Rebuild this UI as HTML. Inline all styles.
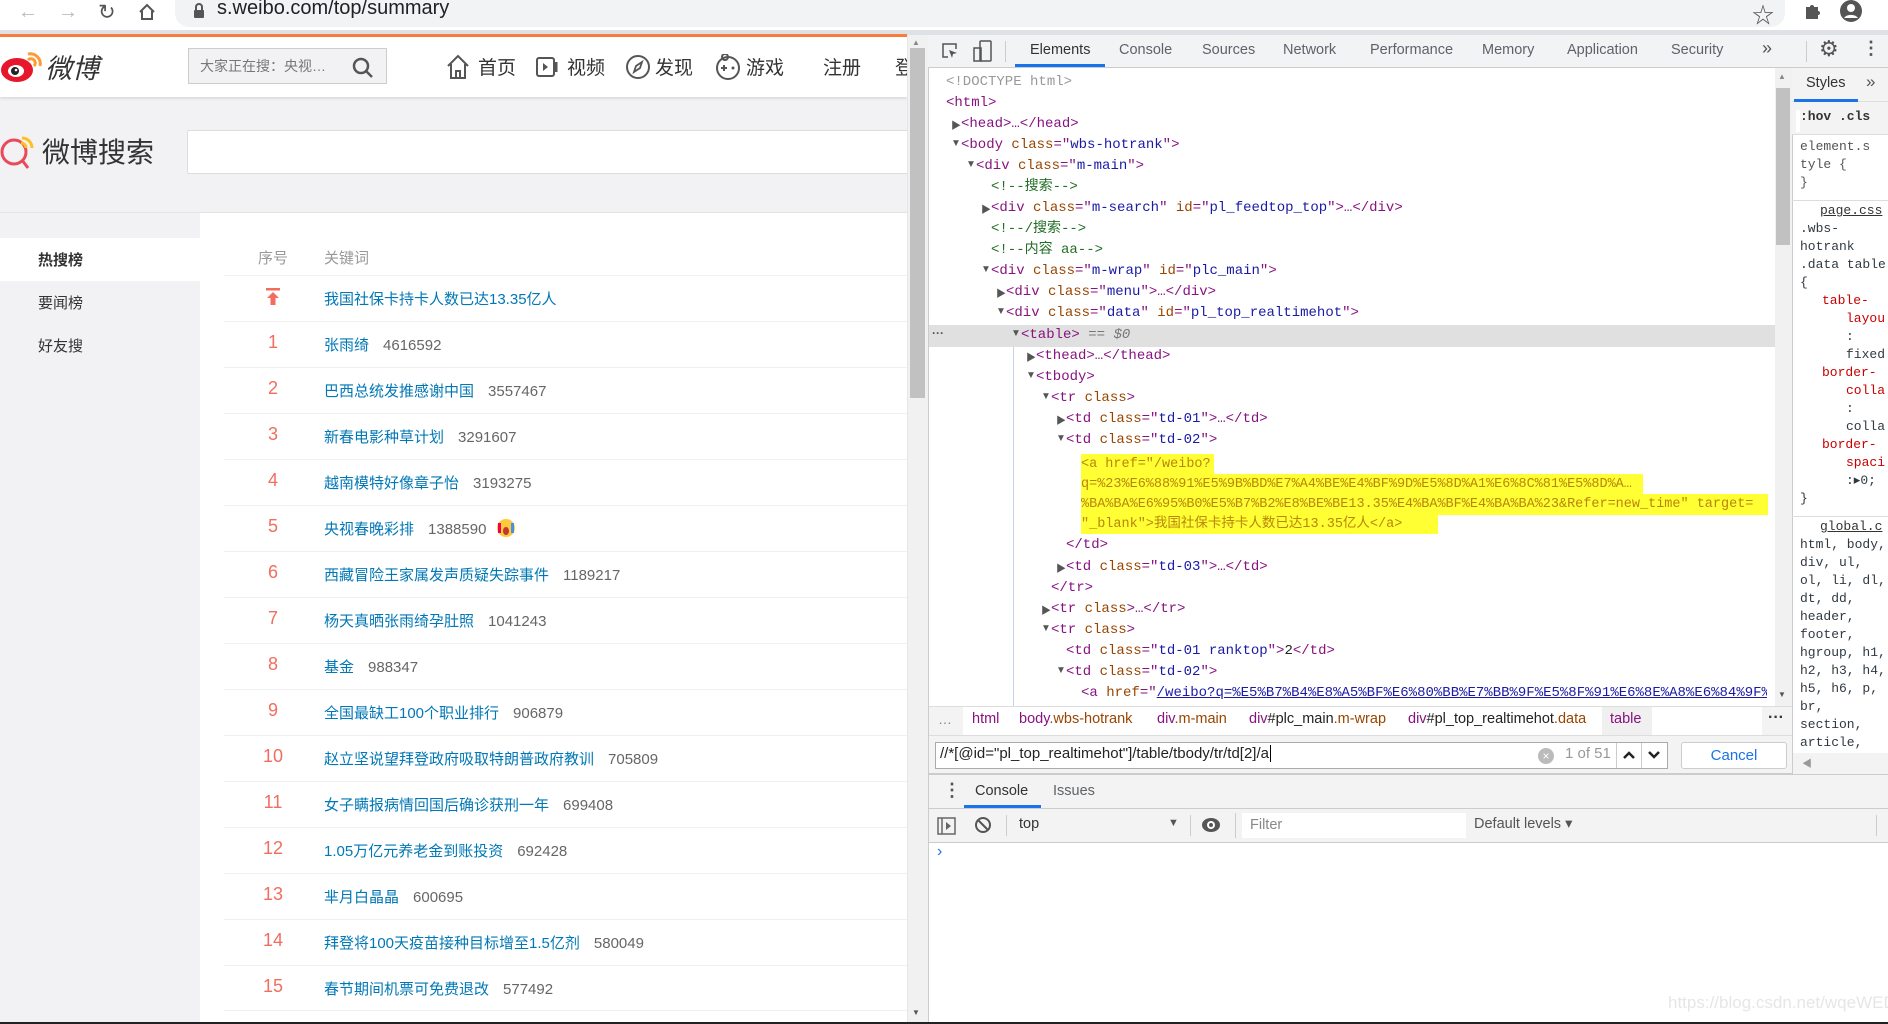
<!DOCTYPE html>
<html><head><meta charset="utf-8">
<style>
*{margin:0;padding:0;box-sizing:border-box}
body{width:1888px;height:1024px;overflow:hidden;position:relative;background:#fff;font-family:"Liberation Sans","Noto Sans CJK SC",sans-serif}
.a{position:absolute;white-space:nowrap}
.m{font-family:"Liberation Mono","DejaVu Sans Mono",monospace}
.tg{color:#881280}.an{color:#994500}.av{color:#1a1aa6}.cm{color:#236e25}
.dl{position:absolute;font-family:"Liberation Mono",monospace;font-size:14px;line-height:21px;height:21px;white-space:nowrap;color:#881280}
.tri{position:absolute;font-size:10px;color:#555}
.rk{position:absolute;left:255px;width:36px;text-align:center;color:#f26d5f;font-size:18px}
.kw{position:absolute;left:324px;color:#0078b6;font-size:15px}
.kw span{color:#666;margin-left:14px}
.sep{position:absolute;left:224px;width:683px;height:1px;background:#f0f0f0}
.st{position:absolute;left:1800px;font-family:"Liberation Mono",monospace;font-size:13px;color:#303942;white-space:nowrap}
</style></head><body>
<!-- browser bar -->
<div class="a" style="left:0;top:0;width:1888px;height:30px;background:#fff"></div>
<div class="a" style="left:18px;top:1px;font-size:20px;color:#bbb">←</div>
<div class="a" style="left:58px;top:1px;font-size:20px;color:#bbb">→</div>
<div class="a" style="left:98px;top:0px;font-size:21px;color:#555">↻</div>
<svg class="a" style="left:138px;top:3px" width="18" height="18" viewBox="0 0 18 18"><path d="M2 9 L9 2 L16 9 M4 8 V16 H14 V8" fill="none" stroke="#555" stroke-width="2"/></svg>
<div class="a" style="left:175px;top:-2px;width:1610px;height:29px;background:#f1f3f4;border-radius:0 0 14px 14px"></div>
<svg class="a" style="left:193px;top:3px" width="12" height="16" viewBox="0 0 12 16"><path d="M3 7 V4 a3 3 0 0 1 6 0 V7" fill="none" stroke="#555" stroke-width="2"/><rect x="1" y="7" width="10" height="8" rx="1" fill="#555"/></svg>
<div class="a" style="left:217px;top:-3px;font-size:20px;color:#202124">s.weibo.com/top/summary</div>
<div class="a" style="left:1752px;top:-2px;font-size:22px;color:#555">☆</div>
<svg class="a" style="left:1803px;top:2px" width="18" height="18" viewBox="0 0 18 18"><path d="M3 5h4a2 2 0 0 1 4 0h4v4a2 2 0 0 1 0 4v4H3z" fill="#555"/></svg>
<svg class="a" style="left:1838px;top:0" width="26" height="24" viewBox="0 0 26 24"><circle cx="13" cy="11" r="11" fill="#555"/><circle cx="13" cy="8" r="4" fill="#fff"/><path d="M6 18a8 6 0 0 1 14 0" fill="#fff"/></svg>
<div class="a" style="left:0;top:30px;width:1888px;height:5px;background:#dee1e6"></div>
<div class="a" style="left:0;top:34px;width:907px;height:3px;background:#fa7d3c"></div>

<!-- weibo page -->
<div class="a" style="left:0;top:37px;width:907px;height:987px;background:#f2f2f5"></div>
<div class="a" style="left:0;top:37px;width:907px;height:60px;background:#fff;box-shadow:0 1px 3px rgba(0,0,0,.15)"></div>
<svg class="a" style="left:0;top:46px" width="44" height="38" viewBox="0 0 44 38"><ellipse cx="17" cy="24" rx="16" ry="12" fill="#e6162d"/><ellipse cx="16" cy="25" rx="8" ry="6" fill="#fff"/><circle cx="15" cy="25" r="4" fill="#222"/><circle cx="16" cy="24" r="1.3" fill="#fff"/><path d="M28 8a10 10 0 0 1 12 12" stroke="#ff9933" stroke-width="3" fill="none"/><path d="M28 14a4 4 0 0 1 6 6" stroke="#ff9933" stroke-width="3" fill="none"/></svg>
<div class="a" style="left:45px;top:47px;font-size:27px;font-style:italic;color:#333">微博</div>
<div class="a" style="left:188px;top:48px;width:199px;height:36px;background:#f2f2f5;border:1px solid #ccc"></div>
<div class="a" style="left:200px;top:56px;font-size:14px;color:#777">大家正在搜：央视…</div>
<svg class="a" style="left:352px;top:57px" width="22" height="22" viewBox="0 0 22 22"><circle cx="9" cy="9" r="7" fill="none" stroke="#555" stroke-width="2.5"/><path d="M14 14 L20 20" stroke="#555" stroke-width="2.5"/></svg>
<svg class="a" style="left:446px;top:54px" width="24" height="26" viewBox="0 0 24 26"><path d="M2 12 L12 2 L22 12 M5 10 V24 H19 V10 M10 24 V17 H14 V24" fill="none" stroke="#555" stroke-width="2"/></svg>
<div class="a" style="left:478px;top:53px;font-size:19px;color:#333">首页</div>
<svg class="a" style="left:535px;top:56px" width="26" height="22" viewBox="0 0 26 22"><rect x="2" y="2" width="17" height="18" rx="2" fill="none" stroke="#555" stroke-width="2"/><path d="M8 7 L13 11 L8 15z" fill="#555"/><path d="M21 6 V16" stroke="#555" stroke-width="3"/></svg>
<div class="a" style="left:567px;top:53px;font-size:19px;color:#333">视频</div>
<svg class="a" style="left:625px;top:54px" width="26" height="26" viewBox="0 0 26 26"><circle cx="13" cy="13" r="11" fill="none" stroke="#555" stroke-width="2"/><path d="M17 8 L11 12 L9 18 L15 14z" fill="none" stroke="#555" stroke-width="1.8"/></svg>
<div class="a" style="left:655px;top:53px;font-size:19px;color:#333">发现</div>
<svg class="a" style="left:714px;top:54px" width="28" height="26" viewBox="0 0 28 26"><circle cx="14" cy="14" r="11" fill="none" stroke="#555" stroke-width="2"/><circle cx="11" cy="3" r="3" fill="none" stroke="#555" stroke-width="2"/><path d="M7 14h6M10 11v6" stroke="#555" stroke-width="2"/><circle cx="19" cy="14" r="1.5" fill="#555"/></svg>
<div class="a" style="left:746px;top:53px;font-size:19px;color:#333">游戏</div>
<div class="a" style="left:823px;top:53px;font-size:19px;color:#333">注册</div>
<div class="a" style="left:895px;top:53px;font-size:19px;color:#333;width:12px;overflow:hidden">登录</div>

<svg class="a" style="left:0;top:132px" width="40" height="40" viewBox="0 0 40 40"><circle cx="14" cy="20" r="12" fill="none" stroke="#e94a59" stroke-width="3"/><path d="M22 28 L28 36" stroke="#e94a59" stroke-width="3"/><path d="M22 6a10 10 0 0 1 10 10" stroke="#ffc01f" stroke-width="3" fill="none"/><path d="M21 11a5 5 0 0 1 5 5" stroke="#ffc01f" stroke-width="3" fill="none"/></svg>
<div class="a" style="left:42px;top:131px;font-size:28px;color:#333">微博搜索</div>
<div class="a" style="left:187px;top:130px;width:722px;height:44px;background:#fff;border:1px solid #ddd;border-radius:2px"></div>

<div class="a" style="left:0;top:212px;width:907px;height:1px;background:#e4e4e4"></div>
<div class="a" style="left:200px;top:213px;width:707px;height:811px;background:#fff"></div>
<div class="a" style="left:0;top:238px;width:200px;height:43px;background:#fff"></div>
<div class="a" style="left:38px;top:249px;font-size:15px;color:#333;font-weight:bold">热搜榜</div>
<div class="a" style="left:38px;top:292px;font-size:15px;color:#333">要闻榜</div>
<div class="a" style="left:38px;top:335px;font-size:15px;color:#333">好友搜</div>

<div class="a" style="left:258px;top:247px;font-size:15px;color:#999">序号</div>
<div class="a" style="left:324px;top:247px;font-size:15px;color:#999">关键词</div>
<div class="sep" style="top:275px"></div>
<svg class="a" style="left:265px;top:288px" width="16" height="18" viewBox="0 0 16 18"><rect x="1" y="0" width="14" height="2.5" fill="#f26d5f"/><path d="M8 4 L14 10 H10.5 V17 H5.5 V10 H2z" fill="#f26d5f"/></svg>
<div class="kw" style="top:288px">我国社保卡持卡人数已达13.35亿人</div>

<div class="sep" style="top:321px"></div><div class="rk" style="top:332px">1</div><div class="kw" style="top:334px">张雨绮<span>4616592</span></div>
<div class="sep" style="top:367px"></div><div class="rk" style="top:378px">2</div><div class="kw" style="top:380px">巴西总统发推感谢中国<span>3557467</span></div>
<div class="sep" style="top:413px"></div><div class="rk" style="top:424px">3</div><div class="kw" style="top:426px">新春电影种草计划<span>3291607</span></div>
<div class="sep" style="top:459px"></div><div class="rk" style="top:470px">4</div><div class="kw" style="top:472px">越南模特好像章子怡<span>3193275</span></div>
<div class="sep" style="top:505px"></div><div class="rk" style="top:516px">5</div><div class="kw" style="top:518px">央视春晚彩排<span>1388590</span></div>
<svg class="a" style="left:496px;top:518px" width="20" height="20" viewBox="0 0 20 20"><circle cx="10" cy="10" r="9" fill="#ffc93c"/><ellipse cx="10" cy="13" rx="3" ry="4" fill="#c0392b"/><rect x="2" y="5" width="3" height="10" fill="#e05"/><rect x="15" y="5" width="3" height="10" fill="#4a90e2"/></svg>
<div class="sep" style="top:551px"></div><div class="rk" style="top:562px">6</div><div class="kw" style="top:564px">西藏冒险王家属发声质疑失踪事件<span>1189217</span></div>
<div class="sep" style="top:597px"></div><div class="rk" style="top:608px">7</div><div class="kw" style="top:610px">杨天真晒张雨绮孕肚照<span>1041243</span></div>
<div class="sep" style="top:643px"></div><div class="rk" style="top:654px">8</div><div class="kw" style="top:656px">基金<span>988347</span></div>
<div class="sep" style="top:689px"></div><div class="rk" style="top:700px">9</div><div class="kw" style="top:702px">全国最缺工100个职业排行<span>906879</span></div>
<div class="sep" style="top:735px"></div><div class="rk" style="top:746px">10</div><div class="kw" style="top:748px">赵立坚说望拜登政府吸取特朗普政府教训<span>705809</span></div>
<div class="sep" style="top:781px"></div><div class="rk" style="top:792px">11</div><div class="kw" style="top:794px">女子瞒报病情回国后确诊获刑一年<span>699408</span></div>
<div class="sep" style="top:827px"></div><div class="rk" style="top:838px">12</div><div class="kw" style="top:840px">1.05万亿元养老金到账投资<span>692428</span></div>
<div class="sep" style="top:873px"></div><div class="rk" style="top:884px">13</div><div class="kw" style="top:886px">芈月白晶晶<span>600695</span></div>
<div class="sep" style="top:919px"></div><div class="rk" style="top:930px">14</div><div class="kw" style="top:932px">拜登将100天疫苗接种目标增至1.5亿剂<span>580049</span></div>
<div class="sep" style="top:965px"></div><div class="rk" style="top:976px">15</div><div class="kw" style="top:978px">春节期间机票可免费退改<span>577492</span></div>
<div class="sep" style="top:1010px"></div>

<!-- page scrollbar -->
<div class="a" style="left:907px;top:35px;width:21px;height:989px;background:#f1f1f1;border-left:1px solid #e6e6e6"></div>
<div class="a" style="left:910px;top:48px;width:15px;height:350px;background:#c1c1c1"></div>
<div class="a" style="left:912px;top:38px;font-size:8px;color:#888">▲</div>
<div class="a" style="left:912px;top:1008px;font-size:8px;color:#555">▼</div>

<!-- devtools -->
<div class="a" style="left:928px;top:35px;width:960px;height:989px;background:#fff;border-left:1px solid #ccc"></div>
<div class="a" style="left:928px;top:35px;width:960px;height:33px;background:#f1f3f4;border-bottom:1px solid #ccc"></div>
<svg class="a" style="left:940px;top:41px" width="20" height="20" viewBox="0 0 20 20"><path d="M8 16H3V3h13v5" fill="none" stroke="#555" stroke-width="1.5"/><path d="M9 9 L17 12 L13 13 L12 17z" fill="#555"/></svg>
<svg class="a" style="left:973px;top:40px" width="20" height="22" viewBox="0 0 20 22"><rect x="7" y="1" width="11" height="20" rx="1" fill="none" stroke="#555" stroke-width="1.5"/><rect x="1" y="8" width="7" height="13" fill="none" stroke="#555" stroke-width="1.5"/></svg>
<div class="a" style="left:1005px;top:41px;width:1px;height:21px;background:#ccc"></div>
<div class="a" style="left:1030px;top:42px;font-size:14.5px;color:#333">Elements</div>
<div class="a" style="left:1015px;top:64px;width:90px;height:3px;background:#1a73e8"></div>
<div class="a" style="left:1119px;top:42px;font-size:14.5px;color:#5f6368">Console</div>
<div class="a" style="left:1202px;top:42px;font-size:14.5px;color:#5f6368">Sources</div>
<div class="a" style="left:1283px;top:42px;font-size:14.5px;color:#5f6368">Network</div>
<div class="a" style="left:1370px;top:42px;font-size:14.5px;color:#5f6368">Performance</div>
<div class="a" style="left:1482px;top:42px;font-size:14.5px;color:#5f6368">Memory</div>
<div class="a" style="left:1567px;top:42px;font-size:14.5px;color:#5f6368">Application</div>
<div class="a" style="left:1671px;top:42px;font-size:14.5px;color:#5f6368">Security</div>
<div class="a" style="left:1762px;top:38px;font-size:18px;color:#555">»</div>
<div class="a" style="left:1806px;top:41px;width:1px;height:21px;background:#ccc"></div>
<div class="a" style="left:1819px;top:36px;font-size:22px;color:#555">⚙</div>
<div class="a" style="left:1862px;top:38px;font-size:18px;color:#555;font-weight:bold">⋮</div>

<!-- DOM tree -->
<div class="a" style="left:929px;top:325px;width:846px;height:22px;background:#e0e0e0"></div>
<div class="a" style="left:932px;top:326px;font-size:12px;color:#555;font-weight:bold">···</div>
<div class="a" style="left:1013px;top:347px;width:1px;height:360px;background:#c9d3e8"></div>
<div class="a" style="left:1081px;top:454px;width:133px;height:21px;background:#ffff33"></div>
<div class="a" style="left:1081px;top:474px;width:562px;height:21px;background:#ffff33"></div>
<div class="a" style="left:1081px;top:494px;width:687px;height:21px;background:#ffff33"></div>
<div class="a" style="left:1081px;top:514px;width:357px;height:20px;background:#ffff33"></div>

<div class="dl" style="left:946px;top:72px;color:#999">&lt;!DOCTYPE html&gt;</div>
<div class="dl" style="left:946px;top:93px">&lt;html&gt;</div>
<div class="tri" style="left:951px;top:117px">▶</div><div class="dl" style="left:961px;top:114px">&lt;head&gt;…&lt;/head&gt;</div>
<div class="tri" style="left:951px;top:138px">▼</div><div class="dl" style="left:961px;top:135px">&lt;body <span class="an">class</span>="<span class="av">wbs-hotrank</span>"&gt;</div>
<div class="tri" style="left:966px;top:159px">▼</div><div class="dl" style="left:976px;top:156px">&lt;div <span class="an">class</span>="<span class="av">m-main</span>"&gt;</div>
<div class="dl cm" style="left:991px;top:177px;color:#236e25">&lt;!--搜索--&gt;</div>
<div class="tri" style="left:981px;top:201px">▶</div><div class="dl" style="left:991px;top:198px">&lt;div <span class="an">class</span>="<span class="av">m-search</span>" <span class="an">id</span>="<span class="av">pl_feedtop_top</span>"&gt;…&lt;/div&gt;</div>
<div class="dl" style="left:991px;top:219px;color:#236e25">&lt;!--/搜索--&gt;</div>
<div class="dl" style="left:991px;top:240px;color:#236e25">&lt;!--内容 aa--&gt;</div>
<div class="tri" style="left:981px;top:264px">▼</div><div class="dl" style="left:991px;top:261px">&lt;div <span class="an">class</span>="<span class="av">m-wrap</span>" <span class="an">id</span>="<span class="av">plc_main</span>"&gt;</div>
<div class="tri" style="left:996px;top:285px">▶</div><div class="dl" style="left:1006px;top:282px">&lt;div <span class="an">class</span>="<span class="av">menu</span>"&gt;…&lt;/div&gt;</div>
<div class="tri" style="left:996px;top:306px">▼</div><div class="dl" style="left:1006px;top:303px">&lt;div <span class="an">class</span>="<span class="av">data</span>" <span class="an">id</span>="<span class="av">pl_top_realtimehot</span>"&gt;</div>
<div class="tri" style="left:1011px;top:328px">▼</div><div class="dl" style="left:1021px;top:325px">&lt;table&gt; <span style="color:#777">== <i>$0</i></span></div>
<div class="tri" style="left:1026px;top:349px">▶</div><div class="dl" style="left:1036px;top:346px">&lt;thead&gt;…&lt;/thead&gt;</div>
<div class="tri" style="left:1026px;top:370px">▼</div><div class="dl" style="left:1036px;top:367px">&lt;tbody&gt;</div>
<div class="tri" style="left:1041px;top:391px">▼</div><div class="dl" style="left:1051px;top:388px">&lt;tr <span class="an">class</span>&gt;</div>
<div class="tri" style="left:1056px;top:412px">▶</div><div class="dl" style="left:1066px;top:409px">&lt;td <span class="an">class</span>="<span class="av">td-01</span>"&gt;…&lt;/td&gt;</div>
<div class="tri" style="left:1056px;top:433px">▼</div><div class="dl" style="left:1066px;top:430px">&lt;td <span class="an">class</span>="<span class="av">td-02</span>"&gt;</div>
<div class="dl" style="left:1081px;top:454px;font-size:13.5px;color:#b8860b">&lt;a href="/weibo?</div>
<div class="dl" style="left:1081px;top:474px;font-size:13.5px;color:#b8860b;width:560px;overflow:hidden">q=%23%E6%88%91%E5%9B%BD%E7%A4%BE%E4%BF%9D%E5%8D%A1%E6%8C%81%E5%8D%A…</div>
<div class="dl" style="left:1081px;top:494px;font-size:13.5px;color:#b8860b;width:686px;overflow:hidden">%BA%BA%E6%95%B0%E5%B7%B2%E8%BE%BE13.35%E4%BA%BF%E4%BA%BA%23&amp;Refer=new_time" target=</div>
<div class="dl" style="left:1081px;top:514px;font-size:13.5px;color:#b8860b">"_blank"&gt;我国社保卡持卡人数已达13.35亿人&lt;/a&gt;</div>
<div class="dl" style="left:1066px;top:535px">&lt;/td&gt;</div>
<div class="tri" style="left:1056px;top:560px">▶</div><div class="dl" style="left:1066px;top:557px">&lt;td <span class="an">class</span>="<span class="av">td-03</span>"&gt;…&lt;/td&gt;</div>
<div class="dl" style="left:1051px;top:578px">&lt;/tr&gt;</div>
<div class="tri" style="left:1041px;top:602px">▶</div><div class="dl" style="left:1051px;top:599px">&lt;tr <span class="an">class</span>&gt;…&lt;/tr&gt;</div>
<div class="tri" style="left:1041px;top:623px">▼</div><div class="dl" style="left:1051px;top:620px">&lt;tr <span class="an">class</span>&gt;</div>
<div class="dl" style="left:1066px;top:641px">&lt;td <span class="an">class</span>="<span class="av">td-01 ranktop</span>"&gt;<span style="color:#222">2</span>&lt;/td&gt;</div>
<div class="tri" style="left:1056px;top:665px">▼</div><div class="dl" style="left:1066px;top:662px">&lt;td <span class="an">class</span>="<span class="av">td-02</span>"&gt;</div>
<div class="dl" style="left:1081px;top:683px;width:686px;overflow:hidden">&lt;a <span class="an">href</span>="<span class="av" style="text-decoration:underline">/weibo?q=%E5%B7%B4%E8%A5%BF%E6%80%BB%E7%BB%9F%E5%8F%91%E6%8E%A8%E6%84%9F%E</span></div>

<!-- DOM scrollbar -->
<div class="a" style="left:1775px;top:68px;width:17px;height:638px;background:#f1f1f1"></div>
<div class="a" style="left:1776px;top:88px;width:14px;height:157px;background:#c1c1c1"></div>
<div class="a" style="left:1778px;top:72px;font-size:8px;color:#888">▲</div>
<div class="a" style="left:1778px;top:690px;font-size:8px;color:#555">▼</div>

<!-- breadcrumbs -->
<div class="a" style="left:929px;top:706px;width:863px;height:30px;background:#fff;border-top:1px solid #ddd;border-bottom:1px solid #ddd"></div>
<div class="a" style="left:929px;top:707px;width:34px;height:28px;background:#f3f3f3"></div>
<div class="a" style="left:938px;top:711px;font-size:14px;color:#888">…</div>
<div class="a" style="left:972px;top:711px;font-size:14.5px;color:#881280">html</div>
<div class="a" style="left:1019px;top:711px;font-size:14.5px;color:#881280">body<span style="color:#994500">.wbs-hotrank</span></div>
<div class="a" style="left:1157px;top:711px;font-size:14.5px;color:#881280">div<span style="color:#994500">.m-main</span></div>
<div class="a" style="left:1249px;top:711px;font-size:14.5px;color:#881280">div<span style="color:#222">#plc_main</span><span style="color:#994500">.m-wrap</span></div>
<div class="a" style="left:1408px;top:711px;font-size:14.5px;color:#881280">div<span style="color:#222">#pl_top_realtimehot</span><span style="color:#994500">.data</span></div>
<div class="a" style="left:1602px;top:707px;width:50px;height:28px;background:#f0f0f0"></div>
<div class="a" style="left:1610px;top:711px;font-size:14.5px;color:#881280">table</div>
<div class="a" style="left:1762px;top:707px;width:30px;height:28px;background:#f3f3f3"></div>
<div class="a" style="left:1768px;top:709px;font-size:16px;color:#333;font-weight:bold">···</div>

<!-- search bar -->
<div class="a" style="left:929px;top:736px;width:863px;height:38px;background:#f3f3f3;border-bottom:1px solid #ccc"></div>
<div class="a" style="left:935px;top:742px;width:733px;height:27px;background:#fff;border:1px solid #aaa"></div>
<div class="a" style="left:940px;top:745px;font-size:15px;color:#222">//*[@id="pl_top_realtimehot"]/table/tbody/tr/td[2]/a<span style="border-left:1px solid #000;margin-left:1px"></span></div>
<div class="a" style="left:1538px;top:748px;width:16px;height:16px;border-radius:50%;background:#bbb;color:#fff;font-size:12px;line-height:16px;text-align:center">×</div>
<div class="a" style="left:1565px;top:745px;font-size:15px;color:#999">1 of 51</div>
<div class="a" style="left:1616px;top:743px;width:1px;height:25px;background:#ccc"></div>
<div class="a" style="left:1641px;top:743px;width:1px;height:25px;background:#ccc"></div>
<svg class="a" style="left:1622px;top:750px" width="14" height="10" viewBox="0 0 14 10"><path d="M2 8 L7 3 L12 8" fill="none" stroke="#222" stroke-width="2.5"/></svg>
<svg class="a" style="left:1647px;top:750px" width="14" height="10" viewBox="0 0 14 10"><path d="M2 2 L7 7 L12 2" fill="none" stroke="#222" stroke-width="2.5"/></svg>
<div class="a" style="left:1681px;top:742px;width:106px;height:27px;background:#fff;border:1px solid #ccc;border-radius:3px;text-align:center;font-size:15px;line-height:25px;color:#1a73e8">Cancel</div>

<!-- styles pane -->
<div class="a" style="left:1792px;top:68px;width:96px;height:706px;background:#fff;border-left:1px solid #ccc"></div>
<div class="a" style="left:1792px;top:68px;width:96px;height:34px;background:#f3f3f3;border-bottom:1px solid #ddd"></div>
<div class="a" style="left:1806px;top:75px;font-size:14.5px;color:#333">Styles</div>
<div class="a" style="left:1794px;top:99px;width:64px;height:3px;background:#1a73e8"></div>
<div class="a" style="left:1866px;top:72px;font-size:17px;color:#555">»</div>
<div class="a" style="left:1792px;top:102px;width:96px;height:33px;background:#f3f3f3;border-bottom:1px solid #ddd"></div>
<div class="a" style="left:1796px;top:110px;width:4px;height:22px;background:#fff"></div>
<div class="st" style="top:109px;font-weight:bold;color:#333">:hov .cls</div>
<div class="st" style="top:139px;color:#555">element.s</div>
<div class="st" style="top:157px;color:#555">tyle {</div>
<div class="st" style="top:175px;color:#555">}</div>
<div class="a" style="left:1792px;top:200px;width:96px;height:1px;background:#ddd"></div>
<div class="st" style="left:1820px;top:203px;text-decoration:underline;color:#333">page.css</div>
<div class="st" style="top:221px">.wbs-</div>
<div class="st" style="top:239px">hotrank</div>
<div class="st" style="top:257px">.data table</div>
<div class="st" style="top:275px">{</div>
<div class="st" style="left:1822px;top:293px;color:#c80000">table-</div>
<div class="st" style="left:1846px;top:311px;color:#c80000">layou</div>
<div class="st" style="left:1846px;top:329px">:</div>
<div class="st" style="left:1846px;top:347px">fixed</div>
<div class="st" style="left:1822px;top:365px;color:#c80000">border-</div>
<div class="st" style="left:1846px;top:383px;color:#c80000">colla</div>
<div class="st" style="left:1846px;top:401px">:</div>
<div class="st" style="left:1846px;top:419px">colla</div>
<div class="st" style="left:1822px;top:437px;color:#c80000">border-</div>
<div class="st" style="left:1846px;top:455px;color:#c80000">spaci</div>
<div class="st" style="left:1846px;top:473px">:▸0;</div>
<div class="st" style="top:491px">}</div>
<div class="a" style="left:1792px;top:516px;width:96px;height:1px;background:#ddd"></div>
<div class="st" style="left:1820px;top:519px;text-decoration:underline;color:#333">global.c</div>
<div class="st" style="top:537px">html, body,</div>
<div class="st" style="top:555px">div, ul,</div>
<div class="st" style="top:573px">ol, li, dl,</div>
<div class="st" style="top:591px">dt, dd,</div>
<div class="st" style="top:609px">header,</div>
<div class="st" style="top:627px">footer,</div>
<div class="st" style="top:645px">hgroup, h1,</div>
<div class="st" style="top:663px">h2, h3, h4,</div>
<div class="st" style="top:681px">h5, h6, p,</div>
<div class="st" style="top:699px">br,</div>
<div class="st" style="top:717px">section,</div>
<div class="st" style="top:735px">article,</div>
<div class="a" style="left:1793px;top:753px;width:95px;height:21px;background:#f3f3f3"></div>
<div class="a" style="left:1802px;top:755px;font-size:10px;color:#999">◀</div>

<!-- drawer -->
<div class="a" style="left:929px;top:774px;width:959px;height:69px;background:#f3f3f3;border-top:1px solid #ccc;border-bottom:1px solid #ccc"></div>
<div class="a" style="left:943px;top:780px;font-size:18px;color:#555;font-weight:bold">⋮</div>
<div class="a" style="left:975px;top:783px;font-size:14.5px;color:#333">Console</div>
<div class="a" style="left:964px;top:805px;width:77px;height:3px;background:#1a73e8"></div>
<div class="a" style="left:1053px;top:783px;font-size:14.5px;color:#5f6368">Issues</div>
<div class="a" style="left:929px;top:808px;width:959px;height:1px;background:#ccc"></div>
<svg class="a" style="left:937px;top:816px" width="20" height="20" viewBox="0 0 20 20"><rect x="1" y="2" width="17" height="16" fill="none" stroke="#666" stroke-width="1.5"/><path d="M5 2V18" stroke="#666" stroke-width="1.5"/><path d="M9 6 L14 10 L9 14z" fill="#666"/></svg>
<svg class="a" style="left:974px;top:816px" width="18" height="18" viewBox="0 0 18 18"><circle cx="9" cy="9" r="7" fill="none" stroke="#555" stroke-width="2"/><path d="M4 4 L14 14" stroke="#555" stroke-width="2"/></svg>
<div class="a" style="left:1006px;top:815px;width:1px;height:21px;background:#ccc"></div>
<div class="a" style="left:1019px;top:816px;font-size:14.5px;color:#333">top</div>
<div class="a" style="left:1168px;top:817px;font-size:11px;color:#555">▼</div>
<div class="a" style="left:1190px;top:815px;width:1px;height:21px;background:#ccc"></div>
<svg class="a" style="left:1201px;top:816px" width="20" height="18" viewBox="0 0 20 18"><ellipse cx="10" cy="9" rx="9" ry="7" fill="#555"/><circle cx="10" cy="9" r="4" fill="#fff"/><circle cx="10" cy="9" r="2" fill="#555"/></svg>
<div class="a" style="left:1235px;top:813px;width:1px;height:25px;background:#ccc"></div>
<div class="a" style="left:1242px;top:813px;width:224px;height:25px;background:#fff"></div>
<div class="a" style="left:1250px;top:817px;font-size:14.5px;color:#888">Filter</div>
<div class="a" style="left:1474px;top:816px;font-size:14.5px;color:#555">Default levels ▾</div>
<div class="a" style="left:1876px;top:815px;width:1px;height:21px;background:#ccc"></div>
<div class="a" style="left:937px;top:843px;font-size:16px;color:#1a73e8">›</div>

<div class="a" style="left:1668px;top:993px;font-size:17px;color:#e6e6e6">https://blog.csdn.net/wqeWED</div>
<div class="a" style="left:0;top:1022px;width:1888px;height:2px;background:#222"></div>
</body></html>
